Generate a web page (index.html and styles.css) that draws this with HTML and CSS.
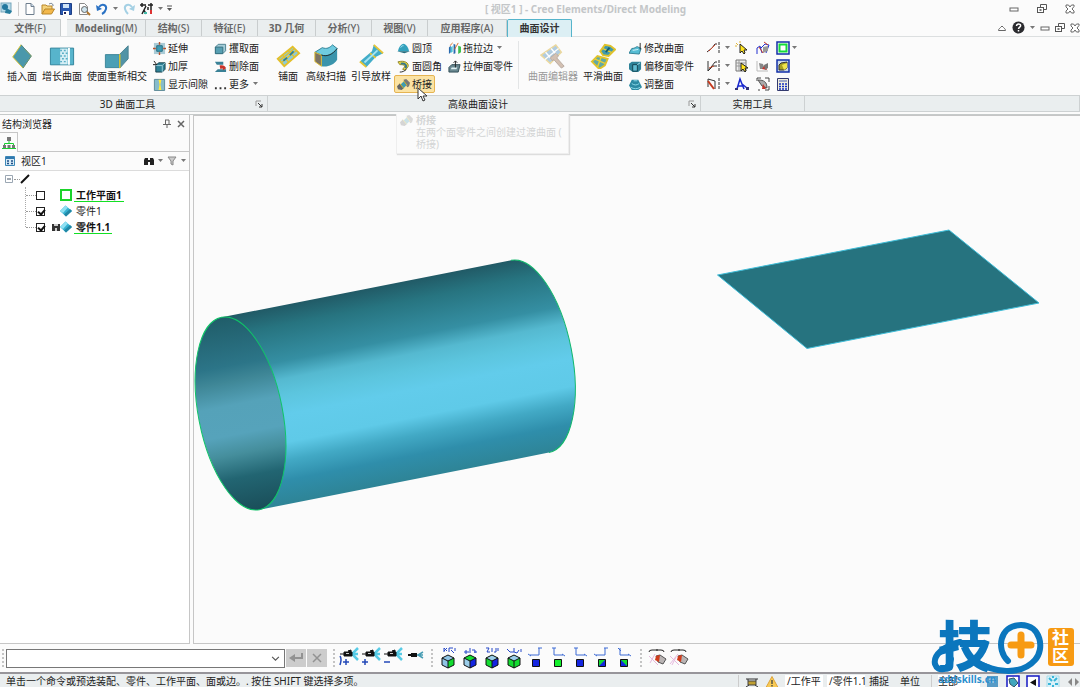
FILE: index.html
```html
<!DOCTYPE html>
<html lang="zh-CN">
<head>
    <meta charset="UTF-8">
    <meta name="viewport" content="width=device-width, initial-scale=1">
    <title>Creo Elements/Direct Modeling</title>
    <link rel="stylesheet" href="styles.css">
</head>
<body>
    <!-- shared icons -->
    <svg class="defs" width="0" height="0">
        <symbol id="caret" viewBox="0 0 5 4"><path d="M0 0h5L2.500 3z" fill="#777"/></symbol>
        <symbol id="min" viewBox="0 0 10 10"><rect x="1" y="4" width="8" height="3" fill="#fff" stroke="#666"/></symbol>
        <symbol id="restore" viewBox="0 0 10 10"><path d="M3.500 3V.5h6v5H7" fill="none" stroke="#555"/><rect x=".5" y="3.500" width="6" height="5" fill="#fff" stroke="#555"/><rect x="2.500" y="5" width="2" height="2" fill="#777"/></symbol>
        <symbol id="close" viewBox="0 0 10 10"><path d="M1 1h2.500L5 3l1.500-2H9v1.500L7 5l2 2v2H6.500L5 7 3.500 9H1V7l2-2-2-2z" fill="#fff" stroke="#666"/></symbol>
        <symbol id="launch" viewBox="0 0 8 8"><path d="M1 6V1h5" fill="none" stroke="#999"/><path d="M3 3l4 4M7 4v3H4" fill="none" stroke="#333"/></symbol>
        <symbol id="part" viewBox="0 0 12 12"><path d="M0 6l5.500-5.500L12 6l-6 5.500z" fill="#35b2d2"/><path d="M0 6l5.500-5.500 2.500 2L3 8z" fill="#8fe0f2"/><path d="M6 11.500L12 6l-2-2-6 5.500z" fill="#2187a5"/></symbol>
        <symbol id="cam" viewBox="0 0 20 18"><path d="M19 1l-6 6 6 6M13 7h6" fill="none" stroke="#57cbe6" stroke-width="2.500"/><path d="M5 5h8v4H5zM1 7h4M9 4l3-1v2z" fill="#111" stroke="#111"/><path d="M7 6h3v1H7z" fill="#ccc"/></symbol>
        <symbol id="bridge" viewBox="0 0 14 14"><path d="M2 9l6-6 4 3-6 6z" fill="#3f9bb1"/><path d="M0 9l3-3 4 5-2 2-4-1z" fill="#666"/><path d="M7 2l3-1 4 4-1 4-2 1z" fill="#777"/><path d="M3 6l4 5M7 3l4 5" stroke="#dbb51c"/></symbol>
    </svg>

    <header class="titlebar">
        <div class="quick">
            <svg class="ic" viewBox="0 0 14 14"><rect x="1" y="1" width="10" height="9" fill="#b9dcea" stroke="#76a6bb"/><circle cx="5" cy="5" r="3" fill="#23789f"/><path d="M6 6l6 3-2 3-5-1z" fill="#277d9e"/></svg>
            <i class="vsep"></i>
            <button aria-label="新建"><svg class="ic" viewBox="0 0 14 14"><path d="M3 1.500h5l3 3V12.500H3z" fill="#fff" stroke="#6e7e8e"/><path d="M8 1.500v3h3" fill="#cde" stroke="#6e7e8e"/></svg></button>
            <button aria-label="打开"><svg class="ic" viewBox="0 0 14 14"><path d="M1 12V3h4l1 1h5v3" fill="#f4d27b" stroke="#b8862a"/><path d="M1 12l3-5h9.500l-3 5z" fill="#f3b84b" stroke="#b8862a"/><path d="M8 2c2-1 4-1 4 2" fill="none" stroke="#678"/></svg></button>
            <button aria-label="保存"><svg class="ic" viewBox="0 0 14 14"><path d="M1.500 1.500h11v11h-11z" fill="#2858b0" stroke="#1d3f86"/><path d="M4 2h6v4H4z" fill="#cfe3f6"/><path d="M4 9h6v4H4z" fill="#fff"/><path d="M5 10h2v2H5z" fill="#225"/></svg></button>
            <button aria-label="预览"><svg class="ic" viewBox="0 0 14 14"><path d="M2.500 1.500h5l3 3v8h-8z" fill="#fff" stroke="#8a8a8a"/><circle cx="7.500" cy="7.500" r="3" fill="#cfe4ee" stroke="#666"/><path d="M10 10l3 3" stroke="#b0762d" stroke-width="2"/></svg></button>
            <button aria-label="撤消"><svg class="ic" viewBox="0 0 14 14"><path d="M4 5c3-4 8-2 7 2-.5 2-2 4-4 5" fill="none" stroke="#2a72c4" stroke-width="2"/><path d="M1 3l1 6 5-2z" fill="#2a72c4"/></svg></button>
            <svg class="caret"><use href="#caret"/></svg>
            <button aria-label="重做"><svg class="ic" viewBox="0 0 14 14"><path d="M10 5C7 1 2 3 3 7c.5 2 2 4 3 5" fill="none" stroke="#a4d0e4" stroke-width="2"/><path d="M13 3l-1 6-5-2z" fill="#a4d0e4"/></svg></button>
            <button aria-label="工具"><svg class="ic" viewBox="0 0 14 14"><path d="M0 3h6M2 1v4M6 4l-4 8M4 8l2 4M8 3h5M11 1v11M8 5v3" fill="none" stroke="#222" stroke-width="1.500"/><path d="M4 10h3v2H4z" fill="#4ba"/><path d="M10 8h2v4h-2z" fill="#d33"/></svg></button>
            <svg class="caret"><use href="#caret"/></svg>
            <svg class="caret more" viewBox="0 0 5 7"><path d="M0 1h5" stroke="#555"/><path d="M0 3h5L2.500 6z" fill="#555"/></svg>
        </div>
        <h1>[ 视区1 ] - Creo Elements/Direct Modeling</h1>
        <div class="winbtns">
            <button aria-label="最小化"><svg><use href="#min"/></svg></button>
            <button aria-label="还原"><svg><use href="#restore"/></svg></button>
            <button aria-label="关闭"><svg><use href="#close"/></svg></button>
        </div>
    </header>

    <nav class="tabs">
        <a class="file" href="#">文件<span>(F)</span></a>
        <a class="w-xl" href="#">Modeling<span>(M)</span></a>
        <a href="#">结构<span>(S)</span></a>
        <a href="#">特征<span>(E)</span></a>
        <a class="w-m" href="#">3D 几何</a>
        <a href="#">分析<span>(Y)</span></a>
        <a href="#">视图<span>(V)</span></a>
        <a class="w-xl" href="#">应用程序<span>(A)</span></a>
        <a class="active" href="#">曲面设计</a>
        <div class="docbtns">
            <button aria-label="收起"><svg viewBox="0 0 10 10"><path d="M1.500 7.500c0-2 1.500-2 2-3L5 3l1.500 1.500c.5 1 2 1 2 3z" fill="#fff" stroke="#666"/></svg></button>
            <button aria-label="帮助"><svg class="help" viewBox="0 0 14 14"><circle cx="7" cy="7" r="6.500" fill="#2b2b2f"/><path d="M4.800 5.500c0-3 4.500-3 4.500-.4C9.300 6.500 7 6.600 7 8.500M7 9.700v1.600" fill="none" stroke="#fff" stroke-width="1.600"/></svg></button>
            <svg class="caret"><use href="#caret"/></svg>
            <button aria-label="最小化窗口"><svg><use href="#min"/></svg></button>
            <button aria-label="还原窗口"><svg><use href="#restore"/></svg></button>
            <button aria-label="关闭窗口"><svg><use href="#close"/></svg></button>
        </div>
    </nav>

    <section class="ribbon">
        <div class="group g-tools">
            <div class="tools">
                <button class="big"><svg viewBox="0 0 28 28"><path d="M13 2l11 12-9 13L4 15z" fill="#4b98ab" stroke="#ddc42c"/><path d="M13 2l11 12-9 13" fill="none" stroke="#3d8295"/></svg>插入面</button>
                <button class="big"><svg viewBox="0 0 28 28"><path d="M1.500 5.500h25v18h-25z" fill="#57b4cc" stroke="#2d8299"/><path d="M12 6h8v17h-8z" fill="#d5eef5"/><path d="M12 8h2m2 0h2m-4 3h2m2 0h2m-8 3h2m2 0h2m-4 3h2m2 0h2m-8 3h2m2 0h2" stroke="#59aec5" stroke-width="1.500"/><path d="M20.500 5.500h2v18h-2z" fill="#fff"/></svg>增长曲面</button>
                <button class="big"><svg viewBox="0 0 28 28"><path d="M1.500 12.500h15v14h-15z" fill="#4b9fb5" stroke="#3a8497"/><path d="M17 12l9-9v14l-9 10z" fill="#5193a6" stroke="#467f90"/><path d="M17 12v15" stroke="#e3c72b" stroke-width="1.500"/></svg>使面重新相交</button>
                <div class="col">
                    <button class="small"><svg viewBox="0 0 14 14"><path d="M1 1h12v12H1z" fill="#aacbd6"/><path d="M4 4h6v6H4z" fill="#3f9cb4" stroke="#246c80"/><path d="M7 0v3M7 11v3M0 7h3M11 7h3" stroke="#b5522f" stroke-width="1.500"/></svg>延伸</button>
                    <button class="small"><svg viewBox="0 0 14 14"><path d="M3 6l3-3h7v7l-3 3H3z" fill="#2f8297" stroke="#173f4a"/><path d="M3 6h7v7M10 6l3-3" fill="none" stroke="#9cd0dc"/><path d="M1 1l3 4M0 5h4" stroke="#111"/></svg>加厚</button>
                    <button class="small"><svg viewBox="0 0 14 14"><path d="M1.500 1.500h11v12h-11z" fill="#86bccb" stroke="#5a8794"/><path d="M6 2h3L8 7l1 6H6l1-6z" fill="#ffe93c"/></svg>显示间隙</button>
                </div>
                <div class="col">
                    <button class="small"><svg viewBox="0 0 14 14"><path d="M1.500 5.500l3-3h8v7l-3 3h-8z" fill="#a5cdd8" stroke="#497d8d"/><path d="M1.500 5.500h8v7h-8z" fill="#579fb2" stroke="#356f80"/></svg>攫取面</button>
                    <button class="small"><svg viewBox="0 0 14 14"><path d="M1 2h9v3H3zM1 13h12v-3H4z" fill="#3a8196"/><path d="M6 6c3-1 6 0 7 3l-3 2-1-2-2 1z" fill="#c8342a"/></svg>删除面</button>
                    <button class="small"><svg viewBox="0 0 14 14"><path d="M1 10h2v2H1zM6 10h2v2H6zM11 10h2v2h-2z" fill="#333"/></svg>更多<svg class="caret"><use href="#caret"/></svg></button>
                </div>
            </div>
            <div class="caption"><span>3D 曲面工具</span><button class="launch" aria-label="3D 曲面工具选项"><svg><use href="#launch"/></svg></button></div>
        </div>

        <div class="group g-design">
            <div class="tools">
                <button class="big"><svg viewBox="0 0 28 28"><path d="M3 17L19 4l7 7L10 25z" fill="#8ccbd9" stroke="#e3bf2b" stroke-width="2"/><path d="M7 21L23 8M5 19L21 6M8 13l7 8M14 8l7 7" stroke="#e3bf2b" stroke-width="1.500"/><path d="M9 19l4-3M16 13l4-4" stroke="#2f8093" stroke-width="2"/></svg>铺面</button>
                <button class="big"><svg viewBox="0 0 28 28"><path d="M9 13c7 2 12-1 17-7v12c-4 6-10 8-17 7z" fill="#3a94ac"/><path d="M2 10l8-5c5 2 8 0 11-3l5 4c-5 7-11 9-17 7z" fill="#6fcbe0" stroke="#2b7d92"/><path d="M2 10l7 3v12l-7-5z" fill="#7b7364" stroke="#e0bd2f"/><path d="M9 13c7 2 12-1 17-7" fill="none" stroke="#1c2c30"/></svg>高级扫描</button>
                <button class="big"><svg viewBox="0 0 28 28"><path d="M17 2l10 9-8 4L9 26l-7-6L15 9z" fill="#42adc9"/><path d="M17 2l10 9M13 11l6 5M2 20l7 6" stroke="#e6c536" stroke-width="2"/><path d="M21 8L7 21" stroke="#a5e4f2" stroke-width="2"/></svg>引导放样</button>
                <div class="col">
                    <button class="small"><svg viewBox="0 0 14 14"><path d="M1 10C2 5 5 2 7 2s5 3 6 8z" fill="#33a1bd"/><path d="M0 10h14l-6 2z" fill="#256b7c"/><path d="M4 6c1-2 2-2 3-2" stroke="#b4e9f5" fill="none"/></svg>圆顶</button>
                    <button class="small"><svg viewBox="0 0 14 14"><path d="M1 2c7-2 12 1 11 5l-3 4-3-1c4-4 2-5-3-5z" fill="#f0db3a" stroke="#8d8432"/><path d="M4 4c5-1 7 2 5 5" fill="none" stroke="#37788a" stroke-width="2"/><path d="M3 13c3 0 5-1 7-3" stroke="#222" fill="none"/></svg>面圆角</button>
                    <button class="small hot"><svg><use href="#bridge"/></svg>桥接</button>
                </div>
                <div class="col">
                    <button class="small"><svg viewBox="0 0 14 14"><path d="M1 6l2-2v7l-2 2zM6 2l2 1v9l-2 1z" fill="#2869ae"/><path d="M11 4l3 1v6l-3 2z" fill="#3fbf4f"/><path d="M2 4l3-3M7 8l4-7" stroke="#d86a1b"/><path d="M3 6l2-2v6l-2 2z" fill="#48c3d9"/></svg>拖拉边<svg class="caret"><use href="#caret"/></svg></button>
                    <button class="small"><svg viewBox="0 0 14 14"><path d="M1 8l3-3h9l-2 8H1z" fill="#6a8890" stroke="#2c4a52"/><path d="M4 8h6l-1 2H3z" fill="#dff1f4"/><path d="M8 8V1M6 3l2-2 2 2" stroke="#222" fill="none"/></svg>拉伸面零件</button>
                </div>
                <i class="divider"></i>
                <button class="big" disabled><svg viewBox="0 0 28 28"><path d="M1 13L17 2l6 8-12 12z" fill="#7faed1" stroke="#e3c25f" stroke-width="1.500"/><path d="M5 18L20 6M6 10l7 8M12 6l6 7" stroke="#fff" stroke-width="1.500"/><path d="M11 16l6-5 3 3-2 2 8 9-3 2-8-9-2 1z" fill="#b99a83" stroke="#8a7566"/></svg>曲面编辑器</button>
                <button class="big"><svg viewBox="0 0 28 28"><path d="M11 9l5-7 6 1 5 4-7 7-6-1z" fill="#409aae" stroke="#e0c22a" stroke-width="2"/><path d="M2 20l6-6 11 3-3 7-6 4z" fill="#60a9a6" stroke="#e0c22a" stroke-width="2"/><path d="M5 17l11 5M8 26l4-11M14 6l9 4" stroke="#e9cf34" stroke-width="1.500"/><path d="M17 10l4-5" stroke="#135e72" stroke-width="2"/></svg>平滑曲面</button>
                <div class="col">
                    <button class="small"><svg viewBox="0 0 14 14"><path d="M0 12l3-5c4 0 4-2 6-2l4 2-2 6z" fill="#56bdd4" stroke="#2d7e93"/><path d="M4 9l6-1" stroke="#d5f2f8"/><path d="M12 8V1" stroke="#222"/></svg>修改曲面</button>
                    <button class="small"><svg viewBox="0 0 14 14"><path d="M0 4l3-2h10v8l-3 3H4l-4-3z" fill="#2e8298"/><path d="M4 5h5v7H4z" fill="#62bdd2" stroke="#123f4c"/><path d="M9 5l3-2" stroke="#b5e6f0"/></svg>偏移面零件</button>
                    <button class="small"><svg viewBox="0 0 14 14"><path d="M0 8l3-6 7 0 2 4 2 4-4 3H3z" fill="#2d8aa3"/><path d="M3 6c3 2 5 2 8 0M2 10c3 2 7 2 10 0M5 3h4" stroke="#8fdbea" fill="none"/></svg>调整面</button>
                </div>
            </div>
            <div class="caption"><span>高级曲面设计</span><button class="launch" aria-label="高级曲面设计选项"><svg><use href="#launch"/></svg></button></div>
        </div>

        <div class="group g-utils">
            <div class="utils">
                <button aria-label="直线"><svg viewBox="0 0 14 14"><path d="M1 11l5-4 3-4h2" fill="none" stroke="#422"/><path d="M3 10l6-6" stroke="#c64b2e"/><path d="M13 1v12" stroke="#333" stroke-dasharray="3 1"/></svg></button>
                <svg class="caret"><use href="#caret"/></svg>
                <button aria-label="选择"><svg viewBox="0 0 14 14"><path d="M5 3v9l2-2 2 3 1-1-1-3h3z" fill="#ffe31a" stroke="#222"/><path d="M1 2l2 2M5 0v2M0 5h2" stroke="#e0b73a"/></svg></button>
                <button aria-label="移动"><svg viewBox="0 0 14 14"><path d="M1 13V7l3-2 2 7M4 8l5-5 4 1-3 8" fill="none" stroke="#2231cf"/><path d="M7 6l5-1v5l-5 2z" fill="#9a9a9a"/><path d="M8 1l4 3M3 6l4 6" stroke="#c83a2a"/></svg></button>
                <button aria-label="工作平面"><svg viewBox="0 0 14 14"><path d="M1 1h12v12H1z" fill="#fff" stroke="#1331a8" stroke-width="1.500"/><path d="M3.500 3.500h7v7h-7z" fill="#fff" stroke="#14dc3a" stroke-width="2"/></svg></button>
                <svg class="caret"><use href="#caret"/></svg>

                <button aria-label="坐标"><svg viewBox="0 0 14 14"><path d="M2 2v10l7-9h2M2 12l5-5h4" fill="none" stroke="#333"/><path d="M3 9l5-2" stroke="#c64b2e"/><path d="M13 1v12" stroke="#333" stroke-dasharray="3 1"/></svg></button>
                <svg class="caret"><use href="#caret"/></svg>
                <button aria-label="列表选择"><svg viewBox="0 0 14 14"><path d="M1 1h10v11H1z" fill="#eee" stroke="#777"/><path d="M1 4h10M1 7h10M4 1v11" stroke="#999"/><path d="M6 4v8l2-2 2 3 1-1-1-3h3z" fill="#ffe31a" stroke="#222"/></svg></button>
                <button aria-label="测量"><svg viewBox="0 0 14 14"><path d="M1 2v10h11" fill="none" stroke="#bbb"/><path d="M3 4l4 1 2 5H4z" fill="#888"/><path d="M6 10l3-4 2 5z" fill="#c8322a"/><path d="M8 6l4-2v5l-3 2z" fill="#777"/></svg></button>
                <button aria-label="零件视图"><svg viewBox="0 0 14 14"><path d="M1 1h12v12H1z" fill="#cddbe6" stroke="#1331a8" stroke-width="1.500"/><path d="M3 6l2-2 6-1v6l-3 2H3z" fill="#a8a01f" stroke="#333"/><path d="M6 6l5-2v5l-3 2z" fill="#efe44c"/></svg></button>
                <i></i>

                <button aria-label="草图"><svg viewBox="0 0 14 14"><path d="M2 10V2l7 2v8" fill="none" stroke="#333"/><path d="M2 4l6 8" stroke="#c63a1e" stroke-width="2"/><path d="M13 1v12" stroke="#333" stroke-dasharray="3 1"/></svg></button>
                <svg class="caret"><use href="#caret"/></svg>
                <button aria-label="角度"><svg viewBox="0 0 14 14"><path d="M2 12L5 2l4 10M7 7l5 4M3 9h5" fill="none" stroke="#1827cf" stroke-width="1.500"/><path d="M0 11h3v2H0zM11 10h3v3h-3z" fill="#337"/></svg></button>
                <button aria-label="检查"><svg viewBox="0 0 14 14"><path d="M1 4V1h4M9 1h4v4M13 9v4H9M4 13H2" fill="none" stroke="#444"/><path d="M2 3c6 0 9 2 9 8l-5-2z" fill="#aaa" stroke="#555"/><path d="M7 7l3 5H6z" fill="#c53228"/></svg></button>
                <button aria-label="计算器"><svg viewBox="0 0 14 14"><path d="M1.500 1.500h11v12h-11z" fill="#f1efdc" stroke="#333a6f"/><path d="M3 3h8v2H3z" fill="#9da6c8"/><path d="M3 7h8M3 9.500h8M3 12h8" stroke="#1530c4" stroke-width="1.500" stroke-dasharray="2 1"/></svg></button>
                <i></i>
            </div>
            <div class="caption"><span>实用工具</span></div>
        </div>
        <div class="group rest"><div class="caption"></div></div>

        <svg class="pointer" viewBox="0 0 12 16"><path d="M1 1v11l3-3 2 5 2-1-2-4h4z" fill="#fff" stroke="#333"/></svg>
    </section>

    <main>
        <aside class="browser">
            <div class="bar head">
                <h2>结构浏览器</h2>
                <button aria-label="固定"><svg viewBox="0 0 10 10"><path d="M3.500 1v4M7 1v4M3 1h4M1 5.500h8M5 6v3" fill="none" stroke="#666"/></svg></button>
                <button aria-label="关闭面板"><svg viewBox="0 0 10 10"><path d="M2 2l6 6M8 2L2 8" stroke="#666" stroke-width="1.500"/></svg></button>
            </div>
            <div class="treetab"><button aria-label="结构"><svg viewBox="0 0 14 14"><path d="M5 1h4v4H5zM1 9h3v3H1zM5.500 9h3v3h-3zM10 9h3v3h-3z" fill="#777"/><path d="M7 5v3M2.500 9V7.500h9V9M0 12.500h14" stroke="#19cf31" fill="none"/></svg></button></div>
            <div class="bar view">
                <svg class="mini" viewBox="0 0 10 10"><path d="M.5.500h9v9h-9z" fill="#d6eaf6" stroke="#3b86b6"/><path d="M1 2h8" stroke="#2f78ae" stroke-width="2"/><path d="M2 5h2M6 5h2M2 7.500h2M6 7.500h2" stroke="#1d4e86" stroke-width="1.500"/></svg>
                <span>视区1</span>
                <button aria-label="查找"><svg viewBox="0 0 10 10"><path d="M0 9V4l1-2h3v2h2V2h3l1 2v5H6V6H4v3z" fill="#222"/></svg></button>
                <svg class="caret"><use href="#caret"/></svg>
                <button aria-label="筛选"><svg viewBox="0 0 10 10"><path d="M1 1h8L6 5v4L4 8V5z" fill="#ccc" stroke="#888"/></svg></button>
                <svg class="caret"><use href="#caret"/></svg>
            </div>
            <div class="tree">
                <div class="root">
                    <svg class="mini" viewBox="0 0 10 10"><path d="M1.500 1.500h7v7h-7z" fill="#fff" stroke="#9ba7b3"/><path d="M3 5h4" stroke="#456"/></svg><i class="dots"></i>
                    <svg class="mini" viewBox="0 0 10 10"><path d="M1 9l8-8" stroke="#111" stroke-width="2"/></svg>
                </div>
                <ul>
                    <li><i class="dots"></i><input type="checkbox" id="n1"><i class="slot"></i><svg viewBox="0 0 12 12"><path d="M1 1h10v10H1z" fill="#fff" stroke="#1bd42a" stroke-width="2"/></svg><label class="cur" for="n1">工作平面1</label></li>
                    <li><i class="dots"></i><input type="checkbox" id="n2" checked><i class="slot"></i><svg><use href="#part"/></svg><label for="n2">零件1</label></li>
                    <li><i class="dots"></i><input type="checkbox" id="n3" checked><i class="slot"><svg viewBox="0 0 8 8"><path d="M0 1h8v7H0z" fill="#333"/><path d="M2 1h4v2H2zM3 5h2v3H3z" fill="#ccc"/></svg></i><svg><use href="#part"/></svg><label class="cur" for="n3">零件1.1</label></li>
                </ul>
            </div>
        </aside>

        <section class="viewport">
            <svg class="scene" viewBox="0 0 886 527" preserveAspectRatio="xMinYMin slice">
                <defs>
                    <linearGradient id="outer" x1="0" y1="-98" x2="0" y2="98" gradientUnits="userSpaceOnUse">
                        <stop offset="0" stop-color="#215a66"/><stop offset=".1" stop-color="#277480"/><stop offset=".28" stop-color="#358fa3"/>
                        <stop offset=".37" stop-color="#55b9d0"/><stop offset=".45" stop-color="#5cc5de"/><stop offset=".55" stop-color="#62cceb"/>
                        <stop offset=".69" stop-color="#5fcae8"/><stop offset=".78" stop-color="#42a9c5"/><stop offset=".88" stop-color="#2f8eab"/><stop offset="1" stop-color="#2e8496"/>
                    </linearGradient>
                    <linearGradient id="inner" x1="0" y1="-98" x2="0" y2="98" gradientUnits="userSpaceOnUse">
                        <stop offset="0" stop-color="#205d69"/><stop offset=".25" stop-color="#2c7588"/><stop offset=".33" stop-color="#3f8797"/>
                        <stop offset=".45" stop-color="#55a2b9"/><stop offset=".6" stop-color="#56a3bb"/><stop offset=".7" stop-color="#458e9c"/>
                        <stop offset=".82" stop-color="#226572"/><stop offset="1" stop-color="#1a4e59"/>
                    </linearGradient>
                </defs>
                <g transform="translate(46.500 297.500) rotate(-11.150)">
                    <path d="M0-98H295A42 98 0 0 1 295 98H0z" fill="url(#outer)"/>
                    <path d="M295-98A42 98 0 0 1 295 98" fill="none" stroke="#12b86c"/>
                    <ellipse rx="42" ry="98" fill="url(#inner)" stroke="#10c468"/>
                </g>
                <path d="M523.500 159L755 114 845 187 613 232.500z" fill="#26737f" stroke="#3fbdd8"/>
            </svg>
            <div class="tip">
                <svg><use href="#bridge"/></svg>
                <div><b>桥接</b><p>在两个面零件之间创建过渡曲面 (<br>桥接)</p></div>
            </div>
        </section>
    </main>

    <div class="cmdbar">
        <i class="grip"></i>
        <div class="combo">
            <input type="text" aria-label="命令">
            <button aria-label="历史记录"><svg viewBox="0 0 8 8"><path d="M1 2.500l3 3 3-3" fill="none" stroke="#555"/></svg></button>
        </div>
        <button class="gray" aria-label="确认"><svg viewBox="0 0 16 12"><path d="M14 1v5H5" fill="none" stroke="#929292" stroke-width="2"/><path d="M1 6l6-4v8z" fill="#929292"/></svg></button>
        <button class="gray" aria-label="取消"><svg viewBox="0 0 16 12"><path d="M4 2l8 8M12 2l-8 8" stroke="#929292" stroke-width="1.500"/></svg></button>
        <i class="grip"></i>
        <div class="views">
            <button aria-label="相机"><svg viewBox="0 0 20 22"><use href="#cam" width="20" height="18"/><path d="M1 9q2 3 0 9M4 15h6M7 12v6" fill="none" stroke="#2449b8" stroke-width="1.500"/></svg></button>
            <button aria-label="添加相机"><svg viewBox="0 0 20 22"><use href="#cam" width="20" height="18"/><path d="M1 15h6M4 12v6" stroke="#2449b8" stroke-width="1.500"/></svg></button>
            <button aria-label="移除相机"><svg viewBox="0 0 20 22"><use href="#cam" width="20" height="18"/><path d="M1 15h6" stroke="#2449b8" stroke-width="1.500"/></svg></button>
            <button aria-label="小相机"><svg viewBox="0 0 20 22"><path d="M18 5l-5 3 5 3M12 8h6" stroke="#489db4" fill="none" stroke-width="1.500"/><path d="M6 6h6v4H6zM3 7h3v2H3z" fill="#111"/></svg></button>
        </div>
        <i class="grip"></i>
        <div class="views">
            <button aria-label="视图 1"><svg viewBox="0 0 20 22"><path d="M4 11l6-3 6 3v7l-6 3-6-3z" fill="#8fc4e5"/><path d="M10 14l6-3v7l-6 3z" fill="#13dc30"/><path d="M10 8l6 3v7l-6 3-6-3v-7zM4 11l6 3 6-3M10 14v7" fill="none" stroke="#111"/><path d="M6 1l3 3M9 1L6 4M6 1v4M11 5V1h4M13 3l3 3M17 1v3" stroke="#2648c8" fill="none"/></svg></button>
            <button aria-label="视图 2"><svg viewBox="0 0 20 22"><path d="M4 11l6-3 6 3v7l-6 3-6-3z" fill="#9bcde9"/><path d="M4 11l6-3 6 3-6 3z" fill="#13dc30"/><path d="M10 14l6-3v7l-6 3z" fill="#1425e0"/><path d="M10 8l6 3v7l-6 3-6-3v-7zM4 11l6 3 6-3M10 14v7" fill="none" stroke="#111"/><path d="M4 5h5M6 3v4M10 1v5M12 3h3v3M14 5h3" stroke="#2648c8" fill="none"/></svg></button>
            <button aria-label="视图 3"><svg viewBox="0 0 20 22"><path d="M4 11l6-3 6 3v7l-6 3-6-3z" fill="#13dc30"/><path d="M4 11l6-3 6 3-6 3z" fill="#9bcde9"/><path d="M10 14l6-3v7l-6 3z" fill="#1425e0"/><path d="M10 8l6 3v7l-6 3-6-3v-7zM4 11l6 3 6-3M10 14v7" fill="none" stroke="#111"/><path d="M4 1h3L5 5h3M10 5V1M12 5h2V1M16 1v3" stroke="#2648c8" fill="none"/></svg></button>
            <button aria-label="视图 4"><svg viewBox="0 0 20 22"><path d="M4 11l6-3 6 3v7l-6 3-6-3z" fill="#13dc30"/><path d="M4 11l6-3 6 3-6 3z" fill="#9bcde9"/><path d="M10 8l6 3v7l-6 3-6-3v-7zM4 11l6 3 6-3M10 14v7" fill="none" stroke="#111"/><path d="M3 2l3 3M6 5h4V1M10 5l3 1 2-3M17 2v3" stroke="#2648c8" fill="none"/></svg></button>
            <button aria-label="前视"><svg viewBox="0 0 20 22"><path d="M6.500 12.500h7v7h-7z" fill="#1425e0" stroke="#111"/><path d="M4 8h9V1M2 7l3 2M12 1h4" stroke="#3c6ad4" fill="none"/></svg></button>
            <button aria-label="顶视"><svg viewBox="0 0 20 22"><path d="M6.500 12.500h7v7h-7z" fill="#13f02c" stroke="#111"/><path d="M6 1v7h9M4 1h4M14 7l3 2" stroke="#3c6ad4" fill="none"/></svg></button>
            <button aria-label="侧视"><svg viewBox="0 0 20 22"><path d="M6.500 12.500h7v7h-7z" fill="#1425e0" stroke="#111"/><path d="M6 1v7h9M4 1h4M14 7l3 2" stroke="#3c6ad4" fill="none"/></svg></button>
            <button aria-label="左视"><svg viewBox="0 0 20 22"><path d="M6.500 12.500h7v7h-7z" fill="#1425e0"/><path d="M6.500 12.500h7l-7 7z" fill="#13dc30"/><path d="M6.500 12.500h7v7h-7z" fill="none" stroke="#111"/><path d="M4 8h9V1M12 1h4M2 7l3 2" stroke="#3c6ad4" fill="none"/></svg></button>
            <button aria-label="后视"><svg viewBox="0 0 20 22"><path d="M6.500 12.500h7v7h-7z" fill="#1425e0"/><path d="M6.500 12.500h7v7z" fill="#13dc30"/><path d="M6.500 12.500h7v7h-7z" fill="none" stroke="#111"/><path d="M6 1v7h9M4 1l3 3M14 7l3 2" stroke="#3c6ad4" fill="none"/></svg></button>
        </div>
        <i class="grip"></i>
        <div class="views">
            <button aria-label="剖切"><svg viewBox="0 0 20 22"><path d="M2 5q0-2 3-2h9q3 0 3 2M10 2v2" fill="none" stroke="#222"/><path d="M2 9l9 9M8 7l-5 9" stroke="#e6b9dd"/><path d="M9 9l4-1 6 4-3 5-5-2z" fill="#b9b4b4" stroke="#555"/><path d="M9 9l4-1-1 7-4-2z" fill="#cf3c1d"/></svg></button>
            <button aria-label="剖切线"><svg viewBox="0 0 20 22"><path d="M2 5q0-2 3-2h9q3 0 3 2M10 2v2" fill="none" stroke="#222"/><path d="M1 17L9 7M3 18l4-8M1 9l9 9" stroke="#e6b9dd"/><path d="M9 9l4-1 6 4-3 5-5-2z" fill="#b9b4b4" stroke="#555"/><path d="M9 9l4-1-1 7-4-2z" fill="#cf3c1d"/></svg></button>
        </div>
    </div>

    <footer class="status">
        <p>单击一个命令或预选装配、零件、工作平面、面或边。. 按住 SHIFT 键选择多项。</p>
        <i class="vsep"></i>
        <svg class="lamp" viewBox="0 0 14 14"><path d="M3 6h8v4H3z" fill="#bf9f31" stroke="#444"/><path d="M1 4h12M3 4v2M11 4v2M1 12l3-2M13 12l-3-2" stroke="#333"/></svg>
        <svg class="warn" viewBox="0 0 14 14"><path d="M7 1.500l6 11H1z" fill="#f8ca55" stroke="#dca33b"/><path d="M7 5v4M7 10v1.500" stroke="#554" stroke-width="1.500"/></svg>
        <span class="field">/工作平</span>
        <span class="field">/零件1.1</span>
        <a href="#">捕捉</a>
        <a href="#">单位</a>
        <i class="vsep"></i>
        <select class="scope" aria-label="选择范围"><option>全部</option></select>
        <svg viewBox="0 0 14 14"><path d="M1 1h11v12H1z" fill="#579bc6"/><path d="M3 4h7M3 7h7" stroke="#d6eafa"/></svg>
        <svg viewBox="0 0 14 14"><path d="M1 1h12v13H1z" fill="#fff" stroke="#1418c4" stroke-width="1.500"/><path d="M3 4l5-1 4 5-4 4-4-3z" fill="#41a6bd" stroke="#356"/></svg>
        <svg viewBox="0 0 14 14"><path d="M1 1h12v13H1z" fill="#fff" stroke="#1418c4" stroke-width="1.500"/><path d="M10 4v7L4 7.500z" fill="#111"/></svg>
        <svg viewBox="0 0 14 14"><path d="M1 1h12v12H1z" fill="#d8f1f9" stroke="#a9dcea"/><path d="M3 3l3 3M11 3L8 6M2 9h3M9 9h3M7 1v2M7 10v3" stroke="#38b5d8" stroke-width="2"/></svg>
        <svg viewBox="0 0 14 14"><path d="M6 3v8L2 7zM9 3v8l4-4z" fill="#888"/></svg>
    </footer>

    <!-- community badge floats over the lower right corner -->
    <svg class="badge" viewBox="0 0 146 70" role="img" aria-label="技 社区 addskills.cn">
        <text class="badge-ji" x="4" y="50">技</text>
        <path d="M26 25C10 29-1 38 1 47c3 9 14 6 16-5M74 44C62 33 65 8 87 8c20 0 24 24 14 35-14 16-42 13-62 0" fill="none" stroke="#0b76bd" stroke-width="6" stroke-linecap="round"/>
        <path d="M87 18v20M77 28h20" stroke="#f79a12" stroke-width="7" stroke-linecap="round"/>
        <rect x="114" y="11" width="26" height="38" rx="3" fill="#f79a12"/>
        <text class="badge-she" x="118" y="27">社</text>
        <text class="badge-she" x="118" y="45">区</text>
        <text class="badge-url" x="4" y="66">addskills.cn</text>
    </svg>
</body>
</html>
```

FILE: styles.css
```css
* {
    box-sizing: border-box;
}
body {
    margin: 0;
    height: 100vh;
    display: flex;
    flex-direction: column;
    overflow: hidden;
    background-color: #fbfbfb;
    color: #222;
    font: 10px/12px "Noto Sans", "Noto Sans CJK SC", sans-serif;
}
h1, h2, p, ul {
    margin: 0;
    padding: 0;
    font-size: 10px;
}
button, input, select {
    font: inherit;
    color: inherit;
    margin: 0;
    padding: 0;
    border: 0;
    background: none;
}
button {
    display: flex;
    align-items: center;
    white-space: nowrap;
}
svg {
    display: block;
    flex: none;
}
a {
    color: inherit;
    text-decoration: none;
}
.defs {
    position: absolute;
}
.caret {
    width: 5px;
    height: 4px;
}
.vsep {
    width: 1px;
    height: 14px;
    background-color: #ccc;
}

/* title bar */
.titlebar {
    display: flex;
    align-items: center;
    height: 19px;
    padding: 0 5px 2px 0;
}
.quick {
    display: flex;
    align-items: center;
    gap: 4px;
    width: 180px;
}
.quick .ic {
    width: 14px;
    height: 14px;
}
.quick .caret.more {
    height: 7px;
}
.titlebar h1 {
    flex: 1;
    text-align: center;
    color: #c3c6c8;
    padding-right: 18px;
}
.winbtns {
    display: flex;
    gap: 18px;
}
.winbtns svg, .docbtns svg {
    width: 10px;
    height: 10px;
}

/* tabs */
.tabs {
    display: flex;
    height: 18px;
    border-bottom: 1px solid #dcdfe0;
}
.tabs a {
    width: 56px;
    height: 17px;
    line-height: 17px;
    text-align: center;
    font-weight: bold;
    color: #666;
    background-color: #eaeeef;
    border: 1px solid #c9cdce;
    border-width: 1px 1px 0 0;
}
.tabs a span {
    font-weight: 500;
}
.tabs .file {
    width: 61px;
    margin-right: 6px;
}
.tabs .w-m {
    width: 58px;
}
.tabs .w-xl {
    width: 79px;
}
.tabs .active {
    width: 65px;
    height: 18px;
    color: #333;
    background-color: #dceff4;
    border: 1px solid #55b4cb;
    border-bottom: 0;
    border-radius: 2px 2px 0 0;
}
.docbtns {
    display: flex;
    align-items: center;
    gap: 5px;
    margin-left: auto;
}
.docbtns .help {
    width: 13px;
    height: 13px;
}
.docbtns .caret {
    width: 5px;
    height: 4px;
}

/* ribbon */
.ribbon {
    position: relative;
    display: flex;
    height: 78px;
    padding: 2px 0;
    border-bottom: 1px solid #c6caca;
}
.group {
    display: flex;
    flex-direction: column;
    flex: none;
}
.tools {
    display: flex;
    flex: 1;
    gap: 5px;
    min-height: 0;
    padding: 0 0 0 7px;
}
.g-tools {
    width: 268px;
}
.g-design {
    width: 433px;
}
.g-utils {
    width: 104px;
}
.rest {
    flex: 1;
}
.rest .caption {
    margin-top: auto;
}
.big {
    flex-direction: column;
    height: 46px;
}
.big svg {
    width: 26px;
    height: 26px;
    margin: 4px 0 1px;
}
.big:disabled {
    color: #999;
}
.big:disabled svg {
    opacity: .6;
}
.col {
    display: flex;
    flex-direction: column;
    margin-left: -2px;
}
.col + .col {
    margin-left: -5px;
}
.small {
    height: 18px;
    gap: 2px;
    padding: 0 2px;
    border: 1px solid transparent;
    border-radius: 2px;
    align-self: flex-start;
}
.small svg {
    width: 13px;
    height: 13px;
}
.small .caret {
    width: 5px;
    height: 4px;
    margin-left: 2px;
}
.hot {
    background-color: #fbe3a4;
    border-color: #e5b452;
}
.divider {
    width: 1px;
    height: 48px;
    margin: 2px 4px 0 -3px;
    background-color: #e3e5e6;
}
.utils {
    flex: 1;
    display: grid;
    grid-template-columns: 21px 8px 21px 20px 18px 8px;
    grid-template-rows: repeat(3, 18px);
    align-items: center;
    padding-left: 5px;
    min-height: 0;
}
.utils svg {
    width: 14px;
    height: 14px;
}
.utils .caret {
    width: 5px;
    height: 4px;
    margin-left: -2px;
}
.caption {
    display: flex;
    flex: none;
    align-items: center;
    height: 17px;
    background-color: #eaeeef;
    border: 1px solid #cdd1d2;
    border-left: 0;
}
.caption span {
    flex: 1;
    text-align: center;
}
.launch {
    margin-right: 4px;
}
.launch svg {
    width: 8px;
    height: 8px;
}
.pointer {
    position: absolute;
    left: 417px;
    top: 50px;
    width: 12px;
    height: 16px;
}

/* work area */
main {
    flex: 1;
    display: flex;
    gap: 3px;
    min-height: 0;
}
.browser {
    width: 190px;
    display: flex;
    flex-direction: column;
    border: 1px solid #c6c6c6;
    border-width: 0 1px 1px 0;
}
.bar {
    display: flex;
    align-items: center;
    gap: 4px;
    height: 17px;
    padding: 0 3px 0 2px;
}
.bar h2, .bar span {
    flex: 1;
    font-weight: normal;
}
.bar button svg, .mini {
    width: 10px;
    height: 10px;
}
.treetab {
    height: 20px;
    border-bottom: 1px solid #c6c6c6;
}
.treetab button {
    width: 18px;
    height: 20px;
    padding: 0 2px;
    background-color: #fbfbfb;
    border: 1px solid #c6c6c6;
    border-width: 1px 1px 0 0;
}
.treetab svg {
    width: 14px;
    height: 14px;
}
.view {
    height: 19px;
    padding-left: 5px;
    border-bottom: 1px solid #dcdcdc;
}
.view span {
    padding-left: 2px;
}
.tree {
    flex: 1;
    background-color: #fff;
}
.root, .tree li {
    display: flex;
    align-items: center;
    height: 16px;
}
.root {
    padding-left: 4px;
}
.tree ul {
    list-style: none;
    margin-left: 25px;
    border-left: 1px dotted #aaa;
    height: 40px;
}
.dots {
    width: 6px;
    border-top: 1px dotted #999;
}
.tree li .dots {
    width: 10px;
}
.tree input {
    appearance: none;
    width: 9px;
    height: 9px;
    border: 1px solid #222;
    background-color: #fff;
}
.tree input:checked::before {
    content: "";
    display: block;
    width: 3px;
    height: 5px;
    margin: 0 2px;
    border: solid #111;
    border-width: 0 2px 2px 0;
    transform: rotate(40deg);
}
.slot {
    width: 15px;
    padding-left: 7px;
}
.slot svg {
    width: 8px;
    height: 8px;
}
.tree li > svg {
    width: 12px;
    height: 12px;
}
.tree label {
    margin-left: 2px;
    padding: 0 2px;
}
.tree .cur {
    font-weight: bold;
    color: #111;
    box-shadow: 0 1px #12e024;
}
.viewport {
    position: relative;
    flex: 1;
    border: 1px solid #c6c6c6;
    border-right: 0;
    min-width: 0;
}
.scene {
    width: 100%;
    height: 100%;
}
.tip {
    position: absolute;
    left: 202px;
    top: -2px;
    display: flex;
    gap: 3px;
    width: 173px;
    height: 40px;
    padding-left: 3px;
    color: #d3d5d5;
    background-color: #fbfbfb;
    border: 1px solid #eee;
    border-top: 0;
    box-shadow: 1px 1px 1px #ddd;
}
.tip svg {
    width: 13px;
    height: 13px;
    opacity: .25;
}
.tip p {
    white-space: nowrap;
}

/* command bar */
.cmdbar {
    display: flex;
    align-items: center;
    height: 30px;
    padding: 0 2px;
    border-bottom: 2px solid #97959a;
}
.grip {
    height: 18px;
    border-left: 2px dotted #c4c4c4;
    margin-right: 2px;
}
.combo {
    display: flex;
    width: 279px;
    height: 19px;
    background-color: #fff;
    border: 1px solid #777;
}
.combo input {
    flex: 1;
    min-width: 0;
}
.combo button {
    width: 13px;
}
.combo svg {
    width: 9px;
    height: 9px;
}
.gray {
    width: 20px;
    height: 18px;
    margin-left: 1px;
    padding: 0 2px;
    background-color: #ccc;
}
.gray svg {
    width: 16px;
    height: 12px;
}
.gray + .grip {
    margin-left: 6px;
}
.views {
    display: flex;
    gap: 2px;
    padding: 0 6px 0 2px;
}
.views svg {
    width: 20px;
    height: 22px;
}
.views + .grip {
    margin-right: 3px;
}

/* status bar */
.status {
    display: flex;
    align-items: flex-start;
    height: 13px;
    gap: 6px;
    padding: 1px 0 0 6px;
    overflow: hidden;
    background-color: #eaeeef;
    white-space: nowrap;
}
.status p {
    flex: 1;
}
.status svg {
    width: 14px;
    height: 14px;
}
.field {
    width: 38px;
    padding-left: 2px;
    background-color: #fff;
}
.status .field {
    margin-right: -2px;
}
.status a {
    margin-right: 5px;
}
.scope {
    appearance: none;
    width: 42px;
    background-color: #fff;
}

/* badge */
.badge {
    position: absolute;
    right: 0;
    bottom: 0;
    width: 146px;
    height: 70px;
    overflow: visible;
}
.badge-ji {
    font: 900 54px "Noto Sans CJK SC", sans-serif;
    fill: #0b76bd;
}
.badge-she {
    font: bold 17px "Noto Sans CJK SC", sans-serif;
    fill: #fff;
}
.badge-url {
    font: bold 10px "Noto Sans", sans-serif;
    fill: #2b8fce;
}
```
